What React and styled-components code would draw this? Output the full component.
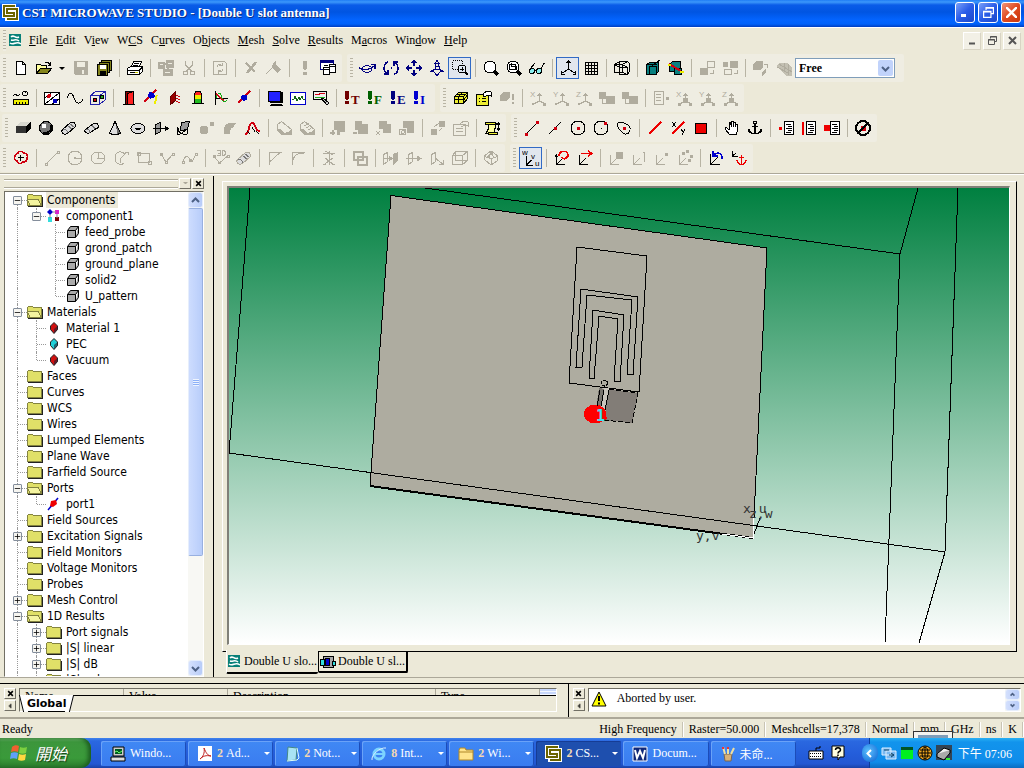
import React from "react";
import styled, { createGlobalStyle } from "styled-components";

const GlobalStyle = createGlobalStyle`
  * {
    box-sizing: border-box;
  }
  body {
    margin: 0;
    overflow: hidden;
    background: #ece9d8;
    color: #000;
    font: 12px "Liberation Serif", "Noto Sans CJK TC", serif;
  }
  button, select {
    font: inherit;
    color: inherit;
    margin: 0;
    padding: 0;
    border: 0;
    background: none;
  }
  ul {
    margin: 0;
    padding: 0;
    list-style: none;
  }
  svg {
    display: block;
    flex: none;
  }
`;

/* ---------- drawings ---------- */

const RED = "#d00010";
const NAVY = "#000080";
const f = { fill: "currentColor", stroke: "none" };

const ICONS = {
  new: <path d="M4.5 2.5h6l3 3v10h-9zM10.5 2.5v3h3" fill="#fff" />,
  open: (
    <>
      <path d="M1.500 14.500v-9h4l1 1h5v3" fill="#ffff9c" />
      <path d="M1.500 14.500l4-5h11l-4 5z" fill="#84841c" />
      <path d="M10 3.500h3l2 2M15.500 3v3h-3" />
    </>
  ),
  save: (
    <>
      <path d="M2 2h14v14H3l-1-1z" {...f} />
      <path d="M5 3h8v5H5zM10 11h2v4h-2z" fill="#efede1" stroke="none" />
    </>
  ),
  saveAll: (
    <>
      <path d="M6.500 1.500h10v10h-10z" fill="#84841c" />
      <path d="M4.500 3.500h10v10h-10z" fill="#84841c" />
      <path d="M2.500 5.500h10v11h-10z" fill="#84841c" />
      <path d="M5 6h6v4H5z" fill="#fff" stroke="none" />
      <path d="M5 12h6v4H5z" {...f} />
    </>
  ),
  print: (
    <>
      <path d="M5.500 7.500l2-5h8l-2 5z" fill="#fff" />
      <path d="M1.500 9.500l3-2h12v5l-3 3h-12z" fill="#fff" />
      <path d="M2 11.500h11l3-3M13.500 12v3M4 13.500h7M8 4.500h5M7 6h5" />
      <path d="M9 13h3v1H9z" fill="#cc0" stroke="none" />
    </>
  ),
  copyTree: (
    <>
      <path d="M1 3h7v7H1zM9 1h8v8H9zM6 10h10v7H6z" {...f} />
      <path d="M8 5h2M11 8v3" strokeWidth="2" />
      <path d="M3 5.500h3M11 4.500h4M8 13.500h5" stroke="#efede1" />
    </>
  ),
  cut: (
    <>
      <path d="M5.500 2v4l6 6M12.500 2v4l-6 6" strokeWidth="1.5" />
      <circle cx="5.500" cy="14" r="2" />
      <circle cx="12.500" cy="14" r="2" />
    </>
  ),
  update: <path d="M2.500 2.500h11l2 2v11h-13zM6 8c0-3 3-3 4-2M11 3.500v3H8M12 10c0 3-3 3-4 2M7 14.500v-3h3" />,
  erase: <path d="M4 4l9 9M14 3L5 14" strokeWidth="2.5" />,
  pencil: (
    <>
      <path d="M1 15l9-9" />
      <path d="M8 4l3-2v4l5 5-4 3-5-5z" {...f} />
    </>
  ),
  bang: <path d="M7 2h4v7l-1 2H8L7 9zM7 13h4v3H7z" {...f} />,
  windows: (
    <g stroke={NAVY}>
      <path d="M1.500 1.500h13v9h-13z" fill="#fff" />
      <path d="M1 2.500h14" strokeWidth="2" />
      <path d="M4.500 8.500h6v7h-6zM10.500 5.500h6v8h-6z" fill="#fff" stroke="#000" />
      <path d="M4 10.500h6M11 7.500h6" stroke="#000" />
      <path d="M5 6.500h4" stroke="#000" />
    </g>
  ),
  rotate: (
    <g stroke={NAVY}>
      <ellipse cx="8" cy="10" rx="4.500" ry="3.500" />
      <path d="M0 8.500c4 4 12 2 16-2M12 5.500h4v4" strokeWidth="1.5" />
    </g>
  ),
  spin: (
    <g stroke={NAVY} strokeWidth="1.500">
      <path d="M6 2.500C1 5 1 12 5 14.500M2 15h4v-4M12 15.500c5-2 5-9 1-12M16 3h-4v4" />
      <path d="M8.500 9h1" strokeWidth="2" />
    </g>
  ),
  pan: (
    <path d="M9 2v5M9 11v5M2 9h5M11 9h5M6.500 4L9 1.500 11.500 4M6.500 14L9 16.500l2.500-2.500M4 6.500L1.500 9 4 11.500M14 6.500L16.500 9 14 11.500" stroke={NAVY} strokeWidth="1.500" />
  ),
  dolly: (
    <path d="M9 1.500l2.500 3h-5zM7.500 7l.5-2M10.500 7l-.5-2M6.500 7.500h5M2.500 12.500l3-1.500 1.500-1h4l1.500 1 3 1.500h-3M2.500 12.500h3L9 16.500l3.500-4M7 8v2M11 8v2" stroke={NAVY} />
  ),
  zoomWindow: (
    <>
      <path d="M1.500 1.500h10v9h-10z" strokeDasharray="1 1" />
      <circle cx="11" cy="10" r="4" fill="#dfe8f4" />
      <path d="M9 10h4M11 8v4" />
      <path d="M14 13l3 3" strokeWidth="2" />
    </>
  ),
  zoom: (
    <>
      <circle cx="8" cy="8" r="6" fill="#fff" />
      <path d="M12 12l4 4" strokeWidth="3" />
    </>
  ),
  zoomAll: (
    <>
      <circle cx="8" cy="8" r="6" fill="#fff" />
      <path d="M4.500 5.500h6v5h-6zM6.500 4v3h5v4" />
      <path d="M12 12l4 4" strokeWidth="3" />
    </>
  ),
  glasses: (
    <>
      <circle cx="4" cy="12" r="2.500" fill="#8ee" />
      <circle cx="11" cy="12" r="2.500" fill="#8ee" />
      <path d="M6 11h3M2 10l5-6M13 10l3-6h1" />
    </>
  ),
  axes: <path d="M9.500 2v8l-6 4M9.500 10l6 4M7.500 4l2-2.500 2 2.500M2.500 12v3h3M16.500 12v3h-3" />,
  grid: <path d="M3.500 3.500h12v12h-12zM6.500 3v13M9.500 3v13M12.500 3v13M3 6.500h13M3 9.500h13M3 12.500h13" />,
  wireBox: <path d="M1.500 5.500h8v8h-8zM6.500 8.500h8v7h-8zM1.500 5.500l5-3h8l2 2v8l-2 3M9.500 5.500l5-3M9.500 5.500l5 3M9.500 13.500l5 2M6.500 2.500v6l-5-3" />,
  cutPlane: (
    <>
      <path d="M2.500 5.500l3-2h9v9l-3 3h-9z" fill="#088080" />
      <path d="M5.500 7.500h7v8h-7z" fill="#088080" />
      <path d="M3 5.500h10M8 7l8-6" />
    </>
  ),
  cutBox: (
    <>
      <path d="M2.500 5.500l3-3h8v8l-3 2h-8z" fill="#088080" />
      <path d="M7.500 9.500h7v6h-7z" fill="#088080" />
      <path d="M2 5l12 7" stroke={RED} strokeWidth="2" />
      <path d="M1 6h3M13 13h4" stroke="#ee0" strokeWidth="2" />
    </>
  ),
  swap: (
    <>
      <path d="M2 9h8v7H2z" {...f} />
      <path d="M9.500 2.500h7v6h-7zM12 14h3v-3" />
    </>
  ),
  swapMany: (
    <>
      <path d="M9 2h8v7H9zM2 3h5v5H2z" {...f} />
      <path d="M3.500 10.500h7v5h-7zM13 14h3v-3" />
    </>
  ),
  solids: (
    <>
      <path d="M1 5l4-3h6v6l-3 3H1zM10 13l4-3v3l-4 4z" {...f} />
      <path d="M12 5h3v4" />
    </>
  ),
  mesh: (
    <>
      <path d="M1 7l4-3h8l4 5v8h-5z" fill="currentColor" stroke="none" opacity=".7" />
      <path d="M2 8l11 6M4 5l13 8M9 4v8M13 5v11" />
    </>
  ),
  units: (
    <>
      <path d="M1.500 7c2-5 4 3 6-2" />
      <circle cx="13" cy="4.500" r="2.500" />
      <path d="M13 4v-2" />
      <path d="M1.500 10.500h15v5h-15z" fill="#ee0" />
      <path d="M4.500 13v2M7.500 13v2M10.500 13v2M13.500 13v2" />
    </>
  ),
  material: (
    <>
      <path d="M1.500 3.500h15v12h-15z" fill="#fff" />
      <path d="M2 15L16 4M2 9l6-5M9 15l7-5" />
      <circle cx="6" cy="7" r="2" fill={RED} stroke="none" />
      <circle cx="12" cy="12" r="2.500" fill="#0000c0" stroke="none" />
    </>
  ),
  wave: <path d="M1 9c3-7 5-6 7 0s6 7 9 1" />,
  boundary: (
    <>
      <path d="M1.500 6.500h9v9h-9zM1.500 6.500l5-4h10l-6 4M16.500 2.500v8l-6 5" stroke="#22a" />
      <circle cx="6" cy="11" r="2" fill={RED} />
      <circle cx="13" cy="8" r="2" fill="#2a2" />
    </>
  ),
  door: (
    <>
      <path d="M5.500 15.500v-13h8v13" fill="#900" />
      <path d="M7.500 4.500l6-2v13h-6z" fill="#f22" />
      <path d="M3 15.500h12" />
    </>
  ),
  portLumped: (
    <>
      <path d="M1 13L13 1" stroke={RED} strokeWidth="2" />
      <path d="M6 3l5 1 1 4-5 2-2-3z" fill="#00c" stroke="none" />
      <path d="M14.500 6c-4 3 0 4-3 9" stroke="#ee0" strokeWidth="2" />
    </>
  ),
  planeWave: (
    <>
      <path d="M4.500 7.500l5-5v9l-5 4z" fill="#900" stroke="#600" />
      <path d="M10 7c2-2 2 2 4 0M10 10c2-2 2 2 4 0M10 13c2-2 2 2 4 0" stroke={RED} />
    </>
  ),
  lamp: (
    <>
      <path d="M5.500 6c0-5 7-5 7 0" fill="#f22" />
      <path d="M5 6h8v4H5z" fill="#ee0" stroke="none" />
      <path d="M5 10h8v4H5z" fill="#2b2" stroke="none" />
      <path d="M5.500 6v8M12.500 6v8M3 14.500h12" />
    </>
  ),
  signal: (
    <>
      <path d="M3.500 2v14M3 9.500h13" />
      <path d="M4 9c2-6 5-6 6 0s4 3 5 2" stroke="#1a1" />
      <path d="M4 5c3 1 5 7 8 6" stroke={RED} strokeWidth="1.500" />
    </>
  ),
  probe: (
    <>
      <path d="M3 14L15 2" stroke={RED} strokeWidth="1.500" />
      <path d="M7 6h5v5l-4 1-2-3z" fill="#00c" stroke="none" />
    </>
  ),
  monitor: (
    <>
      <path d="M2.500 2.500h12v10h-12z" fill="#22f" />
      <path d="M5 14.500h10l2 2H4z" {...f} />
      <path d="M16 3v10H4" strokeWidth="2" />
    </>
  ),
  scope: (
    <>
      <path d="M1.500 3.500h15v12h-15z" fill="#fff" stroke="#00c" strokeWidth="1.500" />
      <path d="M3 10h2l1-3 2 5 2-4 1 3 2-4 1 3h2" stroke="#161" />
    </>
  ),
  results: (
    <>
      <path d="M1.500 2.500h13v8h-13z" fill="#eee" />
      <path d="M3 5l3 1 3-2 4 1" stroke={RED} />
      <path d="M3 8h10" stroke="#2a2" />
      <path d="M9 9l6 7 2-2-6-5z" fill="#ccc" />
    </>
  ),
  solid: (
    <>
      <path d="M2 7h10v7H2z" fill="#333" stroke="none" />
      <path d="M2 7l4-4h11l-5 4z" fill="#d8d8d0" stroke="none" />
      <path d="M12 7l5-4v6l-5 5z" fill="#000" stroke="none" />
    </>
  ),
  sphere: (
    <>
      <circle cx="9" cy="9" r="6.500" fill="#777" />
      <circle cx="7" cy="7" r="2.500" fill="#fff" stroke="none" />
      <path d="M14 6c2 5-3 9-8 8" strokeWidth="2" />
    </>
  ),
  cylinder: (
    <>
      <path d="M2.500 10.500l8-7c3-1 6 1 5 4l-8 7c-4 2-7-1-5-4z" fill="#ddd" />
      <path d="M3 10c3 0 5 2 5 4M8 7l4 3M10 5l4 3" stroke="#777" />
    </>
  ),
  cylinder2: (
    <>
      <path d="M2.500 10.500l4-3 4-3c3-1 6 1 5 4l-4 2-4 3c-4 2-7-1-5-3z" fill="#ddd" />
      <path d="M3 10c3 0 4 2 4 4M9 6l3 4" stroke="#777" />
    </>
  ),
  cone: (
    <>
      <path d="M9 2.500L3.500 14c2 2 9 2 11 0z" fill="#ddd" />
      <path d="M10 4l5 10-4 1z" {...f} opacity=".5" />
    </>
  ),
  torus: (
    <>
      <ellipse cx="9" cy="9.500" rx="7" ry="5" fill="#ddd" />
      <path d="M6 9h6M7 10.500h4" />
    </>
  ),
  extrude: (
    <>
      <path d="M3.500 5.500l5-2v9l-5 3z" fill="#999" />
      <path d="M1 9.500h14M13 7l3 2.500-3 2.500z" fill="currentColor" />
    </>
  ),
  revolve: (
    <>
      <path d="M6.500 3.500l8-1-2 8-7 1z" fill="#999" />
      <path d="M2 8v7h3M3 9c0 5 4 7 9 6v-5l-5 4" />
    </>
  ),
  loft: (
    <>
      <circle cx="6" cy="11" r="4.500" {...f} />
      <circle cx="14" cy="5" r="2.500" {...f} />
    </>
  ),
  sweep: <path d="M3 15V9c1-5 7-6 12-5l-3 5c-3 0-3 3-3 6z" {...f} />,
  curve: (
    <>
      <path d="M1 15c5 0 3-11 7-11s3 9 8 8" stroke={RED} strokeWidth="2" />
      <path d="M3 12l3 3M12 12l3 3M8 8l3 5" />
    </>
  ),
  blend: (
    <>
      <path d="M2.500 5.500l4-3 10 8v5h-10l-4-4z" />
      <path d="M2 10l5 6h10v-6l-4 3-4 1-4-4z" {...f} />
    </>
  ),
  chamfer: (
    <>
      <path d="M2.500 5.500l4-3 10 8v5h-10l-4-4z" />
      <path d="M2 10l5 6h10v-6l-4 3-4 1-4-4z" {...f} />
      <path d="M6 7l5-3M8 9l5-3M10 11l5-3" />
    </>
  ),
  boolAdd: <path d="M5 2h11v11h-5v3H8v-5H5zM1 13h5v1.500H1zM3 11h1.500v5H3z" {...f} />,
  boolSub: <path d="M3 2h7v3h6v10H6v-4H3zM1 13h4v1.500H1z" {...f} />,
  boolCross: (
    <>
      <path d="M4 2h8v3h4v9H8v-4H4z" {...f} />
      <path d="M1 12l4 4M5 12l-4 4" />
    </>
  ),
  boolIns: (
    <>
      <path d="M5 2h11v12H9V9H5z" {...f} />
      <path d="M1.500 10.500h6v5h-6z" />
      <circle cx="5" cy="13" r="1.500" />
    </>
  ),
  transform: (
    <>
      <path d="M2 10h6v6H2zM10 2h6v6h-6z" {...f} />
      <path d="M5 8l5-4M10 12l3-3" />
    </>
  ),
  props: (
    <>
      <path d="M1.500 5.500h12v11h-12z" />
      <path d="M4 9.500h7M4 12.500h7M8 5l4-3 4 1v4l-3-1-4 2" />
    </>
  ),
  propsOn: (
    <>
      <path d="M1.500 5.500h12v11h-12z" fill="#ee3" />
      <path d="M4 9.500h1M7 9.500h4M4 12.500h1M7 12.500h4" />
      <path d="M8 5l4-3 4 1v4l-3-1-4 2z" fill="#fff" />
    </>
  ),
  brick: (
    <>
      <path d="M2.500 7.500l4-4h9v6l-4 5h-9z" fill="#ee3" />
      <path d="M2 7.500h9.500v7M11.500 7.500l4-4M6.500 7v7M2 10.500h10l3-4M5 5.500h9M10 3.500l-3 4" />
    </>
  ),
  solidBang: <path d="M2 6l4-3h6v5l-3 4H2zM14 5h2v6h-2zM14 13h2v2h-2z" {...f} />,
  history: (
    <>
      <path d="M4.500 4.500h9l-3 10h-8c3-3 4-6 2-10z" fill="#ffff9c" />
      <path d="M2.500 3.500h10v2h-10zM5.500 13.500h9v2h-9z" fill="#ee3" />
      <path d="M15.500 4v7M14 5.500l1.500-2 1.500 2M14 9.500l1.500 2 1.500-2" />
    </>
  ),
  edgeCopy: (
    <>
      <path d="M1 3h7v7H1zM8 7h9v8H8z" {...f} />
      <path d="M4 10v4h4" />
    </>
  ),
  pageDot: (
    <>
      <path d="M2.500 2.500h9v13h-9zM4 5.500h5M4 8.500h5M4 11.500h5" />
      <path d="M14 8h3v3h-3z" {...f} />
    </>
  ),
  lineDots: (
    <>
      <path d="M3 15L15 3" />
      <path d="M2 14h3v3H2zM13 2h3v3h-3z" fill={RED} stroke="none" />
    </>
  ),
  lineMid: (
    <>
      <path d="M3 15L15 3" />
      <path d="M8 8h3v3H8z" fill={RED} stroke="none" />
    </>
  ),
  circleMid: (
    <>
      <circle cx="9" cy="9" r="7" />
      <path d="M8 8h3v3H8z" fill={RED} stroke="none" />
    </>
  ),
  circleEdge: (
    <>
      <circle cx="9" cy="9" r="7" />
      <path d="M8.500 9h1" />
      <path d="M12 3h3v3h-3z" fill={RED} stroke="none" />
    </>
  ),
  blob: (
    <>
      <path d="M3 8c-2-5 3-6 6-4s7 2 6 7-6 5-8 2-3-2-4-5z" />
      <path d="M8 8h3v3H8z" fill={RED} stroke="none" />
    </>
  ),
  redLine: <path d="M3 15L15 3" stroke="#e00" strokeWidth="2" />,
  redXY: (
    <>
      <path d="M3 15L15 3" stroke="#e00" strokeWidth="2" />
      <path d="M3 3l4 5M7 3L3 8M12 10l2 3M16 10l-3 6" />
    </>
  ),
  redFace: <path d="M3.500 4.500h11v10h-11z" fill="#e00" />,
  hand: (
    <path d="M6.500 15.500L2 10l1-1.500 3 2V4l1.500-.5L8.500 8V2.500h2V8V3l2 .5V8l.5-3 1.500.5v6L13 15.500z" fill="#fff" />
  ),
  anchor: (
    <>
      <circle cx="9" cy="3.500" r="1.500" />
      <path d="M9 5v10M6 7.500h6M3 11c1 5 11 5 12 0M3 9.500v3M15 9.500v3" strokeWidth="1.500" />
    </>
  ),
  listDot: (
    <>
      <path d="M7.500 2.500h9v13h-9z" fill="#fff" />
      <path d="M9 5.500h5M11 7.500h4M9 9.500h6M11 11.500h4M9 13.500h5" />
      <path d="M2 8h3v3H2z" fill="#e00" stroke="none" />
    </>
  ),
  listLine: (
    <>
      <path d="M6.500 2.500h9v13h-9z" fill="#fff" />
      <path d="M8 5.500h5M10 7.500h4M8 9.500h6M10 11.500h4M8 13.500h5" />
      <path d="M2.500 3v13" stroke="#e00" strokeWidth="2" />
    </>
  ),
  listFace: (
    <>
      <path d="M7.500 2.500h9v13h-9z" fill="#fff" />
      <path d="M9 5.500h5M11 7.500h4M9 9.500h6M11 11.500h4M9 13.500h5" />
      <path d="M1 6h6v6H1z" fill="#e00" stroke="none" />
    </>
  ),
  noPick: (
    <>
      <path d="M7 7h5v5H7z" fill={RED} stroke="none" />
      <circle cx="9" cy="9" r="7" strokeWidth="2" />
      <path d="M4 14L14 4" strokeWidth="1.500" />
    </>
  ),
  newCurve: (
    <>
      <path d="M6 4c1-2 4-2 6 0 3 0 4 3 3 5 0 3-2 4-4 4-2 2-5 2-6-1-3-1-3-3-2-5s1-3 3-3z" stroke={RED} strokeWidth="1.500" />
      <path d="M6 8.500h6M8.500 6v6" />
    </>
  ),
  line: <path d="M3 15L15 3M2 14h2v2H2zM14 2h2v2h-2z" />,
  circle: (
    <>
      <circle cx="9" cy="9" r="7" />
      <path d="M8 9.500h7M8 8.500h2" />
    </>
  ),
  ellipse: (
    <>
      <ellipse cx="9" cy="9" rx="7" ry="6" />
      <path d="M9 3v6h6M8 9h2" />
    </>
  ),
  arc: <path d="M13 5c-4-4-10-2-10 4s6 8 9 5M14 4l-6 6M13 3h3v3M8 9v5" />,
  rect: <path d="M3.500 4.500h11v9h-11zM2 3h3v3H2zM13 12h3v3h-3z" />,
  poly: <path d="M3 5l5 8 7-8M2 4h2v2H2zM7 12h2v2H7zM14 4h2v2h-2z" />,
  spline: <path d="M2 13c3-9 5-6 7-2s4-1 6-7M1 12h2v2H1zM8 10h2v2H8zM14 4h2v2h-2z" />,
  spline3: <path d="M1.500 7l6 7 8-7M6 14h3M5 1.500h3v5H5M5.500 4H8M10.500 1.500v5c4 0 4-5 0-5zM1 6h2v2H1zM15 6h2v2h-2z" />,
  trimBlend: <path d="M3.500 16V3.500H16M3.500 14c0-6 4-10 11-10" />,
  trimCut: <path d="M3.500 16V3.500H16M3.500 13l10-9" />,
  scissor: <path d="M9 2v14M5 9l8 6M13 9l-8 6M3 4.500h12M5 2l8 4M3 15.500h3M12 15.500h3" />,
  overlap: <path d="M2.500 2.500h9v8h-9zM6.500 7.500h9v8h-9z" strokeWidth="2" />,
  sheet: (
    <>
      <path d="M1.500 5.500l4-2v9l-4 3zM1 9.500h14M7 7l3 2.500L7 12z" />
      <path d="M11 5l5-2v9l-5 4z" {...f} />
    </>
  ),
  sheet2: <path d="M3.500 5.500l4-2v9l-4 3zM1 9.500h14M12 7l4 2.500-4 2.500z" />,
  sheet3: <path d="M3.500 5.500l4-2v9l-4 3zM7 9l8 6M11 15h4v-4" />,
  boxIn: <path d="M1.500 6.500h10v9h-10zM4.500 2.500h12v9h-12zM1.500 6.500l3-4M11.500 6.500l5-4M11.500 15.500l5-4" />,
  facet: <path d="M2 7l7-5 7 5-1 5-6 4-6-5zM2 7l7 3 7-3M9 10v6M9 2L7 9M9 2l3 7M5 8l6-4" />,
  csRotate: (
    <>
      <path d="M3.500 6v9.500H12M3.500 15.500l6-6M2 8l1.500-2L5 8" />
      <path d="M6 7c0-6 9-6 9-1s-5 4-6 2M14 8l-3 2" stroke="#e00" strokeWidth="1.500" />
    </>
  ),
  csMove: (
    <>
      <path d="M3.500 6v9.500H12M3.500 15.500l6-6" />
      <path d="M5 4.500h11M12 2l4 2.500L12 7" stroke="#e00" strokeWidth="1.500" />
    </>
  ),
  csFace: (
    <>
      <path d="M3.500 6v9.500H12M3.500 15.500l5-5" />
      <path d="M9 3h7v7H9z" {...f} />
    </>
  ),
  csEdge: <path d="M3.500 6v9.500H12M3.500 15.500l6-6M14.500 3v10M13 3.500h2" />,
  csPoint: (
    <>
      <path d="M3.500 6v9.500H12M3.500 15.500l6-6" />
      <path d="M12 4h3v3h-3z" {...f} />
    </>
  ),
  cs3: (
    <>
      <path d="M3.500 6v9.500H12M3.500 15.500l6-6" />
      <path d="M6 3h3v3H6zM14 6h3v3h-3zM10 1h3v3h-3zM12 10h3v3h-3z" {...f} />
    </>
  ),
  csUndo: (
    <>
      <path d="M3.500 5v10.500H13M3.500 15.500l7-7" />
      <path d="M15 10c1-7-6-7-8-4M6 2v5h5" stroke="#00c" strokeWidth="1.500" />
    </>
  ),
  csAnchor: (
    <>
      <path d="M2.500 2v5H8M2.500 7L6 4" />
      <path d="M11.500 6v10M9 8.500h5M7 11c1 6 8 6 9 0" stroke="#e00" strokeWidth="1.500" />
    </>
  ),
};

// icons that carry letters next to the drawing
const bangs = { bangT: ["T", "#700000"], bangF: ["F", "#006000"], bangE: ["E", NAVY], bangI: ["I", "#0000d0"] };
const letters = { fixX: "X", fixY: "Y", fixZ: "Z", aX: "X", aY: "Y", aZ: "Z" };

function drawIcon(name) {
  if (bangs[name]) {
    const [letter, color] = bangs[name];
    return (
      <>
        <path d="M2 2h4v7l-1 2H3L2 9zM2 12h4v3H2z" fill={color} stroke="none" />
        <text x="8" y="15" fontSize="13" fontWeight="bold" fill={color} stroke="none">{letter}</text>
      </>
    );
  }
  if (letters[name]) {
    return (
      <>
        <text x="1" y="8" fontSize="8" fontFamily="Liberation Sans, sans-serif" {...f}>{letters[name]}</text>
        <path d="M10.500 5v7l-6 3M10.500 12l6 3M8.500 7l2-2.500 2 2.500" />
        <path d={name[0] === "a" ? "M8 9h5v5H8zM3 14h3v3H3zM14 14h3v3h-3z" : "M3 14h2v2H3zM14 14h3v3h-3z"} {...f} />
      </>
    );
  }
  if (name === "wcs") {
    return (
      <g fontSize="8" fontFamily="Liberation Sans, sans-serif">
        <path d="M4.500 7v9.500H11M4.500 16l5-5" />
        <text x="0" y="6" {...f}>w</text>
        <text x="9" y="10" {...f}>v</text>
        <text x="13" y="17" {...f}>u</text>
      </g>
    );
  }
  return ICONS[name];
}

const Icon = ({ name }) => (
  <svg width="18" height="18" viewBox="0 0 18 18" fill="none" stroke="currentColor" shapeRendering="crispEdges">
    {drawIcon(name)}
  </svg>
);

const CstLogo = () => (
  <svg width="17" height="17" viewBox="0 0 17 17" fill="none" shapeRendering="crispEdges">
    <path d="M0 0h14v3h3v14H3v-3H0z" fill="#fff" />
    <path d="M13 2H2v10h10V9M15 5H5v4h8" stroke="#6b6400" strokeWidth="2" />
    <path d="M15 4v11H5" stroke="#6b6400" strokeWidth="2" />
  </svg>
);

const DocLogo = () => (
  <svg width="14" height="13" viewBox="0 0 14 13" fill="none">
    <path d="M0 0h12v12H0z" fill="#088078" />
    <path d="M2 3c3-3 4 2 8 0M2 6c3 1 5-2 8 1M1 9c4 3 6-3 11 1" stroke="#fff" strokeWidth="1.500" />
  </svg>
);

const SchematicLogo = () => (
  <svg width="16" height="12" viewBox="0 0 16 12" stroke="#000" shapeRendering="crispEdges">
    <path d="M3.500 0.500h10v11h-10z" fill="#aaa" />
    <path d="M0.500 3.500h4v6h-4zM12.500 5.500h3v4h-3z" fill="#3dd" />
    <path d="M5.500 2.500h4v7h-4z" fill="#00c" />
  </svg>
);

const FolderIcon = ({ open }) => (
  <svg width="16" height="14" viewBox="0 0 16 14" shapeRendering="crispEdges">
    <path d="M0.500 12.500v-10l1-1h4l1 1h7.500v10z" fill="#e0e068" stroke="#848440" />
    {open && <path d="M3 12l-3-6h11l3 6z" fill="#f4f4a0" stroke="#848440" />}
    <path d="M1 13.500h14.500V4" fill="none" stroke="#222" />
  </svg>
);

const CubeIcon = () => (
  <svg width="16" height="14" viewBox="0 0 16 14" fill="#aaa" stroke="#000">
    <path d="M2.500 5.500h8v7h-8zM2.500 5.500l3-4h8l-3 4M13.500 1.500v7l-3 4" />
  </svg>
);

const GroupIcon = () => (
  <svg width="16" height="14" viewBox="0 0 16 14">
    <path d="M4 0l3 3-3 3-3-3z" fill="#00c" />
    <path d="M9 1h4v4H9z" fill="#d2c" />
    <path d="M2 8h4v5H2z" fill="#3dd" />
    <path d="M9 8h4v4H9z" fill="#700" />
    <path d="M7 3h3M4 6v3M11 5v4" stroke="#888" />
  </svg>
);

const MaterialIcon = ({ color }) => (
  <svg width="16" height="14" viewBox="0 0 16 14" stroke="#222">
    <path d="M8 1.500L11.500 5v3.500L8 12.500 4.500 8.500V5z" fill={color} />
    <path d="M8 8v4.500l3.500-4V5z" fill="#223" stroke="none" opacity=".6" />
  </svg>
);

const PortIcon = () => (
  <svg width="16" height="14" viewBox="0 0 16 14">
    <path d="M2 13L12 1" stroke="#00c" strokeWidth="1.500" />
    <path d="M5 4l5-1 1 4-4 3-3-1z" fill="#e00" />
  </svg>
);

const treeIcons = {
  folder: <FolderIcon />,
  open: <FolderIcon open />,
  cube: <CubeIcon />,
  group: <GroupIcon />,
  red: <MaterialIcon color="#d01010" />,
  cyan: <MaterialIcon color="#20d0d8" />,
  port: <PortIcon />,
};

const Glyph = ({ d, size = 9, width = 1 }) => (
  <svg width={size} height={size} viewBox="0 0 9 9" fill="none" stroke="currentColor" strokeWidth={width}>
    <path d={d} />
  </svg>
);

const RESTORE = "M2.500 2.500v-2h6v5h-2M.5 3.500h6v5h-6zM0 4h7M2 1h7";

/* ---------- title and menu ---------- */

const Desktop = styled.div`
  height: 100vh;
  display: flex;
  flex-direction: column;
`;

const TitleBar = styled.header`
  height: 27px;
  flex: none;
  display: flex;
  align-items: center;
  gap: 3px;
  padding: 0 3px 2px 2px;
  color: #fff;
  background: linear-gradient(#1f7df5 0, #3c98fb 2px, #0a5ce8 5px, #0055e2 12px, #0364ff 20px, #0062fa 24px, #003dc0 27px);

  h1 {
    flex: 1;
    margin: 0;
    font-size: 13px;
    text-shadow: 1px 1px #0a2c80;
    white-space: nowrap;
  }
`;

const CaptionButton = styled.button`
  width: 20px;
  height: 21px;
  display: grid;
  place-items: center;
  border: 1px solid #fff;
  border-radius: 3px;
  background: ${(p) => (p.$close ? "linear-gradient(135deg, #f0957a, #e04a20 50%, #c83810)" : "linear-gradient(135deg, #7ba0f8, #2a5ce8 50%, #1c48c8)")};
`;

const MenuBar = styled.nav`
  height: 26px;
  flex: none;
  display: flex;
  align-items: center;
  padding: 0 3px;
  border-top: 1px solid #fff;
`;

const Menus = styled.div`
  flex: 1;
  display: flex;
  margin-left: 2px;
`;

const MenuButton = styled.button`
  padding: 0 4px;
  white-space: nowrap;
`;

const MdiButton = styled.button`
  width: 18px;
  height: 18px;
  display: grid;
  place-items: center;
  margin-left: 2px;
  color: #555;
  background: #f2f0e6;
  border: 1px solid;
  border-color: #fff #d8d4c4 #d8d4c4 #fff;
`;

/* ---------- toolbars ---------- */

const ToolArea = styled.div`
  flex: none;
  border-bottom: 1px solid #aca899;
  box-shadow: 0 1px #fff;
`;

const ToolRow = styled.div`
  height: 30px;
  display: flex;
  align-items: center;
  gap: 5px;

  &:nth-child(3) {
    padding-left: 2px;
  }
`;

const Band = styled.div`
  height: 28px;
  display: flex;
  align-items: center;
  padding: 0 3px;
  background: #efede2;
  border-radius: 2px;
`;

const Grip = styled.span`
  width: 3px;
  height: 21px;
  margin-right: 3px;
  flex: none;
  background: repeating-linear-gradient(#b8b4a4 0 1px, #efede2 1px 3px);
`;

const ToolButton = styled.button`
  width: 23px;
  height: 22px;
  flex: none;
  display: grid;
  place-items: center;
  color: ${(p) => (p.disabled ? "#b0ac9e" : "#000")};
  ${(p) => p.$on && "background: #e1e6ee; box-shadow: inset 0 0 0 1px #316ac5;"}
`;

const DropArrow = styled.button`
  width: 14px;
  display: grid;
  place-items: center;

  &::after {
    content: "";
    border: 3px solid transparent;
    border-top-color: #000;
    border-bottom: 0;
  }
`;

const Separator = styled.span`
  width: 8px;
  height: 18px;
  flex: none;
  background: linear-gradient(#b8b4a4, #b8b4a4) center / 1px 100% no-repeat;
`;

const SelectBox = styled.span`
  width: 100px;
  height: 20px;
  display: grid;
  align-items: center;
  border: 1px solid #7f9db9;
  background: #fff;
  margin-right: 6px;

  select {
    grid-area: 1 / 1;
    appearance: none;
    width: 100%;
    height: 100%;
    padding-left: 3px;
    font-size: 12px;
    font-weight: bold;
  }
`;

const SelectArrow = styled.span`
  grid-area: 1 / 1;
  justify-self: end;
  width: 15px;
  height: 16px;
  margin-right: 1px;
  display: grid;
  place-items: center;
  color: #4d6185;
  background: #c1d3fb;
  border-radius: 2px;
  pointer-events: none;
`;

const toolRows = [
  [
    "new open > save:off saveAll | print | copyTree:off cut:off | update:off | erase:off pencil:off | bang:off windows",
    "rotate spin pan dolly zoomWindow:on | zoom zoomAll glasses | axes:on grid | wireBox | cutPlane cutBox | swap:off swapMany:off | solids:off mesh:off select",
  ],
  [
    "units | material wave boundary | door portLumped planeWave lamp signal probe | monitor scope results | bangT bangF bangE bangI",
    "brick propsOn solidBang:off | fixX:off fixY:off fixZ:off edgeCopy:off edgeCopy:off | pageDot:off aX:off aY:off aZ:off",
  ],
  [
    "solid sphere cylinder cylinder2 cone torus extrude revolve loft:off sweep:off curve | blend:off chamfer:off | boolAdd:off boolSub:off boolCross:off boolIns:off | transform:off props:off | history",
    "lineDots lineMid circleMid circleEdge blob | redLine redXY redFace | hand anchor | listDot listLine listFace | noPick",
  ],
  [
    "newCurve | line:off circle:off ellipse:off arc:off rect:off poly:off spline:off | spline3:off cylinder:off | trimCut:off trimBlend:off | scissor:off | overlap:off | sheet:off sheet2:off sheet3:off boxIn:off | facet:off",
    "wcs:on | csRotate csMove | csFace:off csEdge:off csPoint:off cs3:off | csUndo csAnchor",
  ],
];

function Tool({ code }) {
  const [name, state] = code.split(":");
  if (name === "|") return <Separator />;
  if (name === ">") return <DropArrow aria-label="Recent files" />;
  if (name === "select") {
    return (
      <SelectBox>
        <select aria-label="View" defaultValue="Free">
          <option>Free</option>
          <option>Front</option>
        </select>
        <SelectArrow>
          <Glyph d="M1 3l3.500 3.500L8 3" width={2} />
        </SelectArrow>
      </SelectBox>
    );
  }
  return (
    <ToolButton aria-label={name} disabled={state === "off"} $on={state === "on"}>
      <Icon name={name} />
    </ToolButton>
  );
}

/* ---------- navigation tree ---------- */

const Workspace = styled.main`
  flex: 1;
  min-height: 0;
  display: flex;
  padding-top: 2px;
`;

const SidePanel = styled.aside`
  width: 214px;
  flex: none;
  display: flex;
  flex-direction: column;
  padding: 0 9px 0 4px;
  border-right: 1px solid #000;
`;

const SideHeader = styled.div`
  height: 15px;
  display: flex;
  align-items: center;
  gap: 1px;

  &::before {
    content: "";
    flex: 1;
    height: 7px;
    border: 1px solid #aca899;
    border-width: 1px 0;
    box-shadow: inset 0 1px #fff, 0 1px #fff;
  }
`;

const TinyButton = styled.button`
  width: 12px;
  height: 11px;
  display: grid;
  place-items: center;
  border: 1px solid;
  border-color: #fff #716f64 #716f64 #fff;
  color: ${(p) => (p.$faint ? "#aca899" : "#000")};
`;

const TreeBox = styled.div`
  flex: 1;
  min-height: 0;
  display: flex;
  background: #fff;
  border: 1px solid #716f64;
  border-color: #716f64 #fff #fff #716f64;
`;

const TreeList = styled.ul`
  flex: 1;
  overflow: hidden;
  padding-left: 3px;
  font: 12px "DejaVu Sans Condensed", "DejaVu Sans", sans-serif;
`;

const TreeRow = styled.li`
  height: 16px;
  display: flex;
  align-items: center;
`;

const Branch = styled.span`
  width: 19px;
  height: 16px;
  flex: none;
  position: relative;
  display: grid;
  place-items: center;

  &::before {
    content: "";
    position: absolute;
    left: 9px;
    top: ${(p) => (p.$kind === "r" ? "8px" : 0)};
    height: ${(p) => ({ " ": 0, l: "8px", r: "8px" }[p.$kind] ?? "16px")};
    border-left: 1px dotted #999;
  }

  &::after {
    content: "";
    position: absolute;
    left: 10px;
    top: 8px;
    width: ${(p) => ("| ".includes(p.$kind) ? 0 : "9px")};
    border-top: 1px dotted #999;
  }
`;

const Expander = styled.button`
  width: 9px;
  height: 9px;
  position: relative;
  z-index: 1;
  display: grid;
  place-items: center;
  border: 1px solid #848e9c;
  border-radius: 1px;
  background: #f6f5f0;
`;

const TreeLabel = styled.span`
  margin-left: 3px;
  padding: 0 3px 0 1px;
  line-height: 16px;
  white-space: nowrap;
  background: ${(p) => (p.$selected ? "#ece9d8" : "none")};
`;

// guides, expander, icon, label
const treeRows = [
  ["r", "-", "open", "Components"],
  ["|l", "-", "group", "component1"],
  ["| t", "", "cube", "feed_probe"],
  ["| t", "", "cube", "grond_patch"],
  ["| t", "", "cube", "ground_plane"],
  ["| t", "", "cube", "solid2"],
  ["| l", "", "cube", "U_pattern"],
  ["t", "-", "open", "Materials"],
  ["|t", "", "red", "Material 1"],
  ["|t", "", "cyan", "PEC"],
  ["|l", "", "red", "Vacuum"],
  ["t", "", "folder", "Faces"],
  ["t", "", "folder", "Curves"],
  ["t", "", "folder", "WCS"],
  ["t", "", "folder", "Wires"],
  ["t", "", "folder", "Lumped Elements"],
  ["t", "", "folder", "Plane Wave"],
  ["t", "", "folder", "Farfield Source"],
  ["t", "-", "open", "Ports"],
  ["|l", "", "port", "port1"],
  ["t", "", "folder", "Field Sources"],
  ["t", "+", "folder", "Excitation Signals"],
  ["t", "", "folder", "Field Monitors"],
  ["t", "", "folder", "Voltage Monitors"],
  ["t", "", "folder", "Probes"],
  ["t", "+", "folder", "Mesh Control"],
  ["t", "-", "open", "1D Results"],
  ["|t", "+", "folder", "Port signals"],
  ["|t", "+", "folder", "|S| linear"],
  ["|t", "+", "folder", "|S| dB"],
  ["|t", "+", "folder", "|S| polar"],
];

const ScrollBar = styled.div`
  width: 15px;
  display: flex;
  flex-direction: column;
  background: #f8f8f4;
`;

const ScrollButton = styled.button`
  height: ${(p) => (p.$small ? "11px" : "16px")};
  display: grid;
  place-items: center;
  color: #4d6185;
  background: linear-gradient(90deg, #d4e0fd, #b8ccf8);
  border: 1px solid #e6eefc;
  border-radius: 3px;
`;

const ScrollTrack = styled.div`
  flex: 1;
`;

const ScrollThumb = styled.div`
  height: 77%;
  display: grid;
  place-items: center;
  background: linear-gradient(90deg, #cddcfe, #b8cdfa);
  border: 1px solid #98b0e0;
  border-left-color: #e6eefc;
  border-radius: 2px;

  &::after {
    content: "";
    width: 6px;
    height: 7px;
    background: repeating-linear-gradient(#eef4fe 0 1px, #8cb0f8 1px 2px);
  }
`;

/* ---------- 3D view ---------- */

const ViewArea = styled.section`
  flex: 1;
  min-width: 0;
  display: flex;
  flex-direction: column;
  padding: 5px 7px 3px 8px;
`;

const ViewFrame = styled.div`
  flex: 1;
  min-height: 0;
  padding: 4px 6px 6px 4px;
  border: 1px solid;
  border-color: #fff #000 #000 #fff;
`;

const Canvas = styled.svg`
  width: 100%;
  height: 100%;
  border: 1px solid;
  border-width: 2px 1px 1px 2px;
  border-color: #808078 #fff #fff #808078;
  background: linear-gradient(#008040, #fff);
`;

const Model = () => (
  <Canvas viewBox="229 188 780 456" preserveAspectRatio="none" fill="none" stroke="#000" shapeRendering="crispEdges">
    <path d="M425 188L900 254" />
    <path d="M391 195.500L767 248l-14 290-383-52z" fill="#aeaca0" />
    <path d="M370 486l383 52" strokeWidth="2" />
    <path d="M722 534l31 4v-20" stroke="#fff" />
    <path d="M250 188l-21 265 716 99M918 188l-18 66-15 389M958 188l-13 364-26 91" />
    <path d="M577 247l70 9-8 136-70-9zM569 383l70 9" />
    <path d="M581 289l57 8-5 78-6-1 5-74-45-5-5 72-6 0zM593 310l31 5-4 67-6-1 4-62-19-3-5 63-5-1z" />
    <path d="M603 388h6l-5 28-4-6z" fill="#c8c4bc" stroke="none" />
    <path d="M609 389l29 4-6 30-28-3z" fill="#827d77" stroke="none" />
    <path d="M609 389l29 4-6 30M604 420l28 3" strokeDasharray="5 2" />
    <circle cx="604.500" cy="383" r="3" strokeDasharray="3 1" />
    <path d="M599 388l5 1-3 20-5-1z" fill="#77746e" stroke="none" />
    <ellipse cx="595" cy="414" rx="11" ry="9.500" fill="#f00" stroke="none" />
    <path d="M603 406l4 13-8 4z" fill="#f00" stroke="none" />
    <path d="M600 390l-3 16M604 390l-3 16M609 390l-4 20" />
    <path d="M760 518l-6 16" />
    <g fontFamily="DejaVu Sans Mono, monospace" fontSize="13" fill="#333" stroke="none">
      <text x="596" y="421" fill="#40e0f4" fontSize="15" fontWeight="bold">1</text>
      <text x="743" y="513">x,u</text>
      <text x="749" y="518">z,w</text>
      <text x="696" y="540">y,v</text>
    </g>
  </Canvas>
);

const DocTabs = styled.div`
  height: 22px;
  flex: none;
  display: flex;
  align-items: flex-start;
  padding-left: 4px;
`;

const DocTab = styled.button`
  height: ${(p) => (p.$active ? "24px" : "21px")};
  margin-top: ${(p) => (p.$active ? "-2px" : 0)};
  display: flex;
  align-items: center;
  gap: 2px;
  padding: 0 1px;
  white-space: nowrap;
  background: #ece9d8;
  border: 1px solid #000;
  border-top-width: 0;
  border-left-color: ${(p) => (p.$active ? "#fff" : "#000")};
  border-right-width: ${(p) => (p.$active ? 0 : "2px")};
  border-bottom-width: 2px;
  border-radius: 0 0 2px 2px;
`;

/* ---------- docked lists ---------- */

const DockRow = styled.section`
  height: 40px;
  flex: none;
  display: flex;
  border-top: 1px solid #aca899;
`;

const Dock = styled.div`
  flex: ${(p) => p.$grow};
  min-width: 0;
  display: flex;
  gap: 3px;
  margin-top: 5px;
  padding: 4px 3px 5px 4px;
  border-top: 1px solid #000;
  border-right: ${(p) => (p.$divided ? "1px solid #000" : 0)};
`;

const DockButtons = styled.div`
  display: flex;
  flex-direction: column;
  gap: 1px;
`;

const ParamBox = styled.div`
  flex: 1;
  min-width: 0;
  margin-right: 8px;
  border: 1px solid;
  border-color: #716f64 #fff #fff #716f64;
`;

const ParamHead = styled.div`
  height: 7px;
  overflow: hidden;
  display: grid;
  grid-template-columns: 104px 104px 208px 1fr 16px;
  line-height: 15px;
  border-bottom: 1px solid #000;

  span {
    padding-left: 5px;
    border-right: 1px solid #aca899;
  }
  i {
    background: repeating-linear-gradient(#c8d8fc 0 2px, #f4f8ff 2px 3px);
  }
`;

const SheetTab = styled.button`
  display: block;
  position: relative;
  height: 17px;
  margin-left: 4px;
  padding: 0 3px;
  margin-top: -1px;
  background: #fff;
  border-bottom: 1px solid #000;
  font: bold 11px "DejaVu Sans", sans-serif;

  &::before,
  &::after {
    content: "";
    position: absolute;
    top: 0;
    width: 4px;
    height: 17px;
    background: #fff;
  }
  &::before {
    left: -3px;
    border-left: 1px solid #000;
    transform: skewX(14deg);
  }
  &::after {
    right: -3px;
    border-right: 1px solid #000;
    transform: skewX(-14deg);
  }
`;

const MessageBox = styled.div`
  flex: 1;
  min-width: 0;
  display: flex;
  background: #fff;
  border: 1px solid;
  border-color: #716f64 #fff #fff #716f64;

  p {
    flex: 1;
    margin: 2px 0 0 10px;
  }
  > svg {
    margin: 2px 0 0 2px;
  }
`;

const StatusBar = styled.footer`
  height: 21px;
  flex: none;
  display: flex;
  align-items: center;
  position: relative;
  padding: 2px 1px 0;
  border-top: 2px solid #aca899;
  white-space: nowrap;
`;

const StatusText = styled.span`
  padding: 0 5px 0 6px;
  border-right: 1px solid #c8c4b4;
  box-shadow: 1px 0 #fff;

  &:first-child {
    flex: 1;
    padding-left: 1px;
    border: 0;
    box-shadow: none;
  }
`;

const Hint = styled.span`
  position: absolute;
  right: 71px;
  bottom: 0;
  width: 40px;
  height: 7px;
  border: 1px solid #333;
  border-bottom: 0;
  background: #f4f4f0;

  &::after {
    content: "";
    position: absolute;
    inset: 3px 4px 0;
    background: #7f9db9;
  }
`;

/* ---------- taskbar ---------- */

const TaskBar = styled.footer`
  height: 30px;
  flex: none;
  display: flex;
  color: #fff;
  white-space: nowrap;
  background: linear-gradient(#3f83ee 0, #2a68e0 3px, #245edb 15px, #2257d2 26px, #1941a5);
`;

const StartButton = styled.button`
  width: 91px;
  flex: none;
  display: flex;
  align-items: center;
  gap: 6px;
  padding-left: 10px;
  border-radius: 0 10px 10px 0;
  background: linear-gradient(#6cb86a 0, #3c963c 4px, #3a9a3a 20px, #2a7a2c);
  box-shadow: inset -3px 0 4px #1c5c20;
  font: italic 16px/22px "Noto Sans CJK TC", sans-serif;
  text-shadow: 1px 1px 1px #143c14;
`;

const Tasks = styled.div`
  flex: 1;
  min-width: 0;
  display: flex;
  gap: 2px;
  padding: 3px 10px 2px 10px;
`;

const Task = styled.button`
  flex: 1;
  min-width: 0;
  display: flex;
  align-items: center;
  gap: 4px;
  padding: 0 3px 0 9px;
  border-radius: 2px;
  box-shadow: inset 1px 1px ${(p) => (p.$active ? "#163c94" : "#6aa2f8")}, inset -1px 0 #1c4cb8;
  background: ${(p) => (p.$active ? "#1e4fae" : "linear-gradient(#4088f4, #3a7cf0)")};

  b {
    color: #f4d8b0;
    margin-right: 3px;
  }
`;

const TaskLabel = styled.span`
  flex: 1;
  text-align: left;
`;

const TaskArrow = styled.span`
  border: 3px solid transparent;
  border-top-color: #fff;
  border-bottom: 0;
`;

const Language = styled.div`
  display: flex;
  align-items: center;
  gap: 7px;
  padding: 0 24px 0 2px;
`;

const Tray = styled.div`
  display: flex;
  align-items: center;
  gap: 3px;
  padding: 0 12px 0 0;
  border-left: 1px solid #0a3c9c;
  background: linear-gradient(#28b0f4 0, #1294ec 4px, #0f8cea 24px, #0c6cc0);
`;

const TrayToggle = styled.button`
  width: 16px;
  height: 18px;
  display: grid;
  place-items: center;
  margin-left: -8px;
  border-radius: 9px;
  background: radial-gradient(circle at 40% 40%, #5cc0ff, #0a60d0);
`;

const Clock = styled.time`
  padding-left: 3px;
`;

const taskIcons = {
  computer: (
    <g>
      <path d="M3 1h11v9H3z" fill="#ccc" stroke="#000" />
      <path d="M5 3h7v5H5z" fill="#052" />
      <path d="M1 11h14v4H1z" fill="#ddd" stroke="#000" />
      <path d="M5 6l2-1 2 2 3-2" stroke="#6f6" fill="none" />
    </g>
  ),
  acrobat: (
    <g>
      <path d="M1 0h14v15H1z" fill="#fff" />
      <path d="M7 2c2 5 4 8 7 8-5-1-8 0-11 3 3-2 5-6 4-11z" fill="none" stroke="#c02020" />
    </g>
  ),
  notepad: (
    <g>
      <path d="M4 1l9 1-1 12-9 1z" fill="#a8e4f4" stroke="#488" />
      <path d="M3 15l10-1 2-2-2-10" fill="none" stroke="#dff" />
    </g>
  ),
  browser: (
    <g fill="none">
      <circle cx="8" cy="8" r="5" stroke="#7cd4ff" strokeWidth="3" />
      <path d="M4 8h9" stroke="#7cd4ff" strokeWidth="2" />
      <path d="M1 14C0 9 9 1 15 2" stroke="#d8f0ff" />
    </g>
  ),
  folder: <path d="M1 4l1-2h5l1 2h7v10H1zM1 6h14" fill="#ffe48c" stroke="#b08828" />,
  word: (
    <g>
      <path d="M1 1h14v14H1z" fill="#102878" stroke="#fff" />
      <path d="M3 4l2 8 3-7 3 7 2-8" fill="none" stroke="#fff" strokeWidth="2" />
    </g>
  ),
  paint: (
    <g>
      <path d="M4 8h8l-1 7H5z" fill="#d8b078" stroke="#765" />
      <path d="M5 8L3 1M8 8V2M11 8l3-6" stroke="#f0e0a0" strokeWidth="2" />
      <path d="M3 3V1M8 3V1" stroke="#e33" strokeWidth="2" />
    </g>
  ),
};

const TaskIcon = ({ name }) =>
  name === "cst" ? (
    <CstLogo />
  ) : (
    <svg width="16" height="16" viewBox="0 0 16 16">
      {taskIcons[name]}
    </svg>
  );

const tasks = [
  { icon: "computer", label: "Windo..." },
  { icon: "acrobat", count: 2, label: "Ad..." },
  { icon: "notepad", count: 2, label: "Not..." },
  { icon: "browser", count: 8, label: "Int..." },
  { icon: "folder", count: 2, label: "Wi..." },
  { icon: "cst", count: 2, label: "CS...", active: true },
  { icon: "word", label: "Docum..." },
  { icon: "paint", label: "未命..." },
];

// the number is the position of the underlined letter
const menus = [
  ["File", 0],
  ["Edit", 0],
  ["View", 1],
  ["WCS", 1],
  ["Curves", 1],
  ["Objects", 1],
  ["Mesh", 0],
  ["Solve", 0],
  ["Results", 0],
  ["Macros", 1],
  ["Window", 3],
  ["Help", 0],
];

const CLOSE = "M1.500 1.500l6 6M7.500 1.500l-6 6";

function NavigationTree() {
  return (
    <SidePanel>
      <SideHeader>
        <TinyButton $faint aria-label="Menu">
          <Glyph d="M2.500 3.500h4M3.500 4.500h2" />
        </TinyButton>
        <TinyButton aria-label="Close tree">
          <Glyph d={CLOSE} width={2} size={7} />
        </TinyButton>
      </SideHeader>
      <TreeBox>
        <TreeList>
          {treeRows.map(([guides, box, icon, label], i) => (
            <TreeRow key={label}>
              {guides.split("").map((kind, n) => (
                <Branch key={n} $kind={kind}>
                  {box && n === guides.length - 1 && (
                    <Expander aria-label={`Toggle ${label}`}>
                      <Glyph size={7} d={box === "+" ? "M1 4.500h7M4.500 1v7" : "M1 4.500h7"} />
                    </Expander>
                  )}
                </Branch>
              ))}
              {treeIcons[icon]}
              <TreeLabel $selected={i === 0}>{label}</TreeLabel>
            </TreeRow>
          ))}
        </TreeList>
        <ScrollBar>
          <ScrollButton aria-label="Scroll up">
            <Glyph d="M1 6l3.500-3.500L8 6" width={2} />
          </ScrollButton>
          <ScrollTrack>
            <ScrollThumb />
          </ScrollTrack>
          <ScrollButton aria-label="Scroll down">
            <Glyph d="M1 3l3.500 3.500L8 3" width={2} />
          </ScrollButton>
        </ScrollBar>
      </TreeBox>
    </SidePanel>
  );
}

const DockControls = () => (
  <DockButtons>
    <TinyButton aria-label="Close panel">
      <Glyph d={CLOSE} width={2} size={7} />
    </TinyButton>
    <TinyButton aria-label="Collapse panel">
      <Glyph d="M5.500 2v5M4.500 3v3M3.500 4v1" size={8} />
    </TinyButton>
  </DockButtons>
);

function Docks() {
  return (
    <DockRow>
      <Dock $grow="569 1 0" $divided>
        <DockControls />
        <ParamBox>
          <ParamHead>
            <span>Name</span>
            <span>Value</span>
            <span>Description</span>
            <span>Type</span>
            <i />
          </ParamHead>
          <SheetTab>Global</SheetTab>
        </ParamBox>
      </Dock>
      <Dock $grow="455 1 0">
        <DockControls />
        <MessageBox>
          <svg width="16" height="16" viewBox="0 0 16 16">
            <path d="M8 1l7 14H1z" fill="#ff0" stroke="#000" strokeLinejoin="round" />
            <path d="M8 5v5M8 11.500v2" stroke="#000" strokeWidth="2" />
          </svg>
          <p>Aborted by user.</p>
          <ScrollBar>
            <ScrollButton $small aria-label="Previous message">
              <Glyph d="M2 6l2.500-2.500L7 6" width={2} size={7} />
            </ScrollButton>
            <ScrollButton $small aria-label="Next message">
              <Glyph d="M2 3l2.500 2.500L7 3" width={2} size={7} />
            </ScrollButton>
          </ScrollBar>
        </MessageBox>
      </Dock>
    </DockRow>
  );
}

function WindowsTaskBar() {
  return (
    <TaskBar>
      <StartButton>
        <svg width="19" height="18" viewBox="0 0 19 18">
          <path d="M2 3c2-2 5-2 7-1L8 8C6 7 3 7 1 8z" fill="#f06030" />
          <path d="M10 3c2 1 5 1 7 0l-1 6c-2 1-5 1-7 0z" fill="#7cd040" />
          <path d="M1 9c2-1 5-1 7 0l-1 6c-2-1-5-1-7 0z" fill="#60a0f8" />
          <path d="M9 10c2 1 5 1 7 0l-1 6c-2 1-5 1-7 0z" fill="#ffd840" />
        </svg>
        開始
      </StartButton>
      <Tasks>
        {tasks.map((t) => (
          <Task key={t.label} $active={t.active}>
            <TaskIcon name={t.icon} />
            <TaskLabel>
              {t.count && <b>{t.count}</b>}
              {t.label}
            </TaskLabel>
            {t.count && <TaskArrow />}
          </Task>
        ))}
      </Tasks>
      <Language>
        <svg width="16" height="14" viewBox="0 0 16 14">
          <path d="M8 5V2h4V0" stroke="#000" fill="none" />
          <path d="M1 5h14v8H1z" fill="#fff" stroke="#000" />
          <path d="M2 7.500h12M2 10.500h12" stroke="#000" strokeDasharray="1 1" />
        </svg>
        <svg width="14" height="16" viewBox="0 0 14 16">
          <path d="M1 1h12v11H9l-2 3v-3H1z" fill="#ffffe0" stroke="#000" />
          <path d="M4.500 5c0-3 5-3 5 0 0 2-2.500 1-2.500 3.500M7 9.500v1.500" stroke="#000" strokeWidth="1.500" fill="none" />
        </svg>
      </Language>
      <Tray>
        <TrayToggle aria-label="Show hidden icons">
          <Glyph d="M6 1L2.500 4.500 6 8" width={2} />
        </TrayToggle>
        <svg width="16" height="16" viewBox="0 0 16 16">
          <path d="M1 3h9v7H1zM5 6h10v8H5z" fill="#78b8f0" stroke="#def" />
          <path d="M3 5h5M8 10h5M10 8l3 2-3 2" stroke="#146" fill="none" />
        </svg>
        <svg width="14" height="14" viewBox="0 0 14 14">
          <path d="M1 1h12v12H1z" fill="#00f020" />
          <path d="M1 1h12v3H1z" fill="#052" />
        </svg>
        <svg width="16" height="16" viewBox="0 0 16 16" fill="none" stroke="#000">
          <circle cx="8" cy="8" r="7" fill="#f0a820" />
          <ellipse cx="8" cy="8" rx="3" ry="6" />
          <path d="M2 8h12M3 5h10M3 11h10M8 2v12" />
        </svg>
        <svg width="16" height="16" viewBox="0 0 16 16">
          <path d="M0 0h16v15H0z" fill="#345" />
          <path d="M1 9l7-6 6 2-6 7z" fill="#eee" stroke="#000" />
          <path d="M1 9v3l7 3 6-7V5" fill="#aaa" stroke="#000" />
          <path d="M10 14h4" stroke="#3e3" strokeWidth="2" />
        </svg>
        <Clock>下午 07:06</Clock>
      </Tray>
    </TaskBar>
  );
}

export default function App() {
  return (
    <Desktop>
      <GlobalStyle />
      <TitleBar>
        <CstLogo />
        <h1>CST MICROWAVE STUDIO - [Double U slot antenna]</h1>
        <CaptionButton aria-label="Minimize">
          <Glyph d="M0 7.500h5" width={3} />
        </CaptionButton>
        <CaptionButton aria-label="Restore">
          <Glyph d={RESTORE} size={11} />
        </CaptionButton>
        <CaptionButton $close aria-label="Close">
          <Glyph d="M0 0l9 9M9 0L0 9" width={2} size={11} />
        </CaptionButton>
      </TitleBar>
      <MenuBar>
        <Grip />
        <DocLogo />
        <Menus>
          {menus.map(([text, at]) => (
            <MenuButton key={text}>
              {text.slice(0, at)}
              <u>{text[at]}</u>
              {text.slice(at + 1)}
            </MenuButton>
          ))}
        </Menus>
        <MdiButton aria-label="Minimize document">
          <Glyph d="M1 7.500h6" width={2} />
        </MdiButton>
        <MdiButton aria-label="Restore document">
          <Glyph d={RESTORE} />
        </MdiButton>
        <MdiButton aria-label="Close document">
          <Glyph d="M1 1l7 7M8 1L1 8" width={2} />
        </MdiButton>
      </MenuBar>
      <ToolArea>
        {toolRows.map((bands) => (
          <ToolRow key={bands[0]}>
            {bands.map((band) => (
              <Band key={band}>
                <Grip />
                {band.split(" ").map((code, i) => (
                  <Tool key={i} code={code} />
                ))}
              </Band>
            ))}
          </ToolRow>
        ))}
      </ToolArea>
      <Workspace>
        <NavigationTree />
        <ViewArea>
          <ViewFrame>
            <Model />
          </ViewFrame>
          <DocTabs>
            <DocTab $active>
              <DocLogo />
              Double U slo...
            </DocTab>
            <DocTab>
              <SchematicLogo />
              Double U sl...
            </DocTab>
          </DocTabs>
        </ViewArea>
      </Workspace>
      <Docks />
      <StatusBar>
        {["Ready", "High Frequency", "Raster=50.000", "Meshcells=17,378", "Normal", "mm", "GHz", "ns", "K"].map((text) => (
          <StatusText key={text}>{text}</StatusText>
        ))}
        <Hint />
      </StatusBar>
      <WindowsTaskBar />
    </Desktop>
  );
}
